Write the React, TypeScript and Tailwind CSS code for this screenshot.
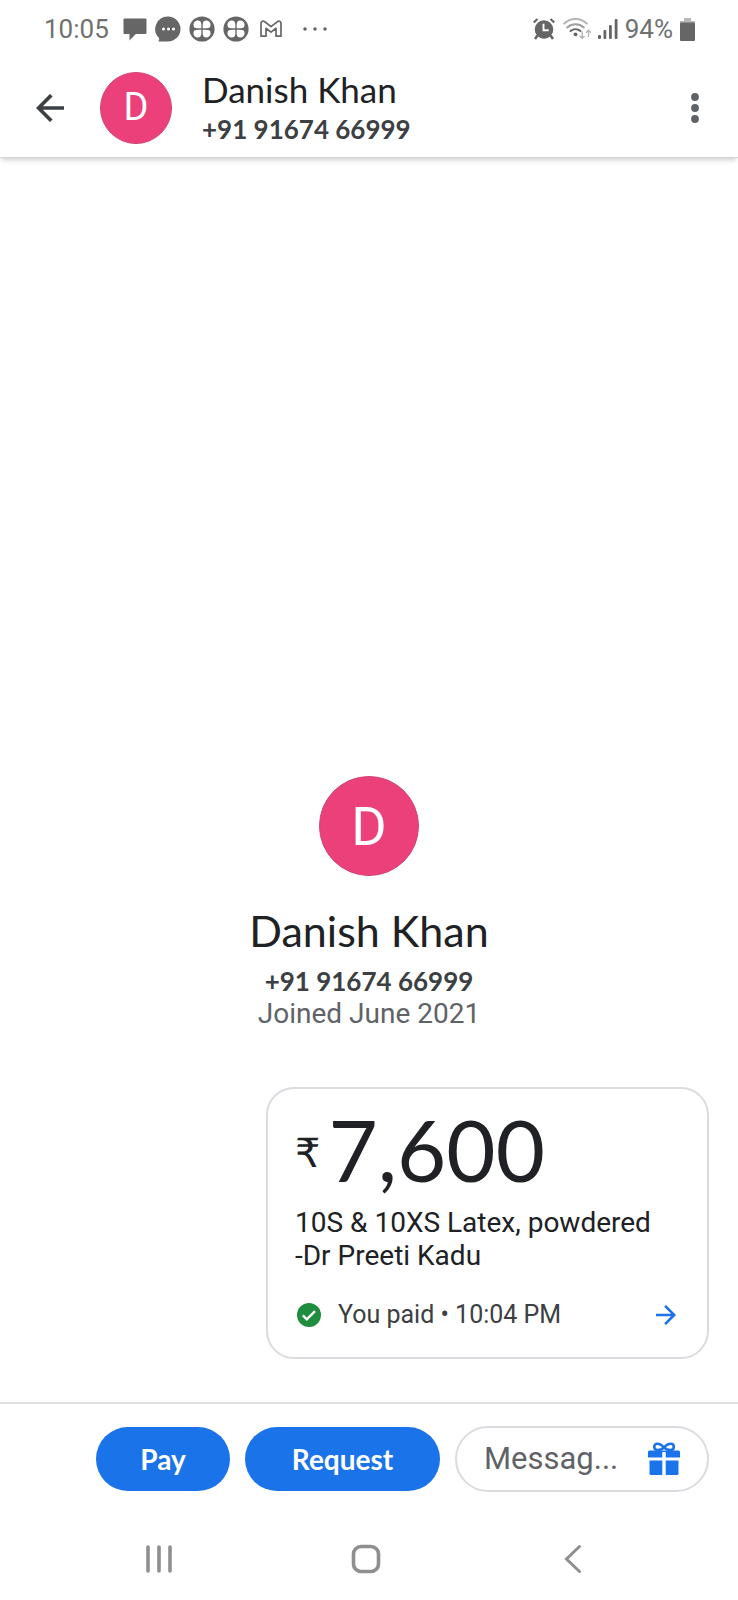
import type { ReactNode } from "react";

const GREY = "#666666";

function ChatSquareIcon() {
  return (
    <svg viewBox="0 0 24 24" className="h-6 w-6" fill={GREY} aria-hidden="true">
      <path d="M1.500 1.500h21a1 1 0 0 1 1 1v13.500a1 1 0 0 1-1 1H12.800L6.500 23.500v-6.500h-5a1 1 0 0 1-1-1V2.500a1 1 0 0 1 1-1z" />
    </svg>
  );
}

function ChatRoundIcon() {
  return (
    <svg viewBox="0 0 26 26" className="h-[26px] w-[26px]" fill={GREY} aria-hidden="true">
      <path d="M13 .5a12.500 12.500 0 1 1 0 25H3.200c.9-.9 1.100-2 .8-3.600A12.500 12.500 0 0 1 13 .5z" />
      <circle cx="8.500" cy="13" r="1.500" fill="#fff" />
      <circle cx="13.500" cy="13" r="1.500" fill="#fff" />
      <circle cx="18.500" cy="13" r="1.500" fill="#fff" />
    </svg>
  );
}

function CloverIcon() {
  const petal = "M12.300 12.300C12.400 9.500 12.400 7.500 11.700 5.700A3.500 3.500 0 1 0 5.700 11.700C7.500 12.400 9.500 12.400 12.300 12.300z";
  return (
    <svg viewBox="0 0 26 26" className="h-[26px] w-[26px]" aria-hidden="true">
      <circle cx="13" cy="13" r="12.600" fill={GREY} />
      <g fill="#fff">
        {[0, 90, 180, 270].map((angle) => (
          <path key={angle} d={petal} transform={`rotate(${angle} 13 13)`} />
        ))}
      </g>
    </svg>
  );
}

function MailIcon() {
  return (
    <svg viewBox="0 0 24 18" className="h-[18px] w-6" fill="none" stroke={GREY} strokeWidth="1.700" strokeLinejoin="round" aria-hidden="true">
      <path d="M2 3.500C2 1 4.200.6 5.800 1.800L12 6.600l6.200-4.800C19.800.6 22 1 22 3.500V16.200h-5V8.300l-5 3.800-5-3.800v7.900H2z" />
    </svg>
  );
}

function AlarmIcon() {
  return (
    <svg viewBox="0 0 24 24" className="h-6 w-6" fill="none" stroke={GREY} aria-hidden="true">
      <circle cx="12" cy="12.500" r="9.300" fill={GREY} stroke="none" />
      <path d="M1.700 5.500 5.500 2M22.300 5.500 18.500 2" strokeWidth="2.200" />
      <path d="M5.500 18.500 3 22M18.500 18.500 21 22" strokeWidth="2.600" />
      <path d="M11.500 6.800v6.400h5.200" stroke="#fff" strokeWidth="1.900" />
    </svg>
  );
}

function WifiIcon() {
  return (
    <svg viewBox="0 0 28 24" className="h-6 w-7" fill="none" strokeLinecap="round" aria-hidden="true">
      <path d="M1.200 6.500C7.500.4 17.500.4 23.800 6.500" stroke="#b5b5b5" strokeWidth="2" />
      <path d="M4.200 10.400c4.800-4.300 11.800-4.300 16.600 0" stroke="#a0a0a0" strokeWidth="2" />
      <path d="M7.500 14c2.900-2.500 7.100-2.500 10 0" stroke={GREY} strokeWidth="2" />
      <circle cx="12.500" cy="17.300" r="1.900" fill={GREY} />
      <path d="M19.200 15v6M17.200 19.200l2 2 2-2M25.500 19.500v-6M23.500 15.300l2-2 2 2" stroke="#b5b5b5" strokeWidth="1.400" />
    </svg>
  );
}

function SignalIcon() {
  return (
    <svg viewBox="0 0 20 20" className="h-5 w-5" fill={GREY} aria-hidden="true">
      <rect x="0" y="16" width="3" height="4" rx="1" />
      <rect x="5.500" y="11" width="2.800" height="9" rx="1" />
      <rect x="11" y="6" width="2.800" height="14" rx="1" />
      <rect x="16.700" y="0" width="2.800" height="20" rx="1" />
    </svg>
  );
}

function BatteryIcon() {
  return (
    <svg viewBox="0 0 15 23" className="h-[23px] w-[15px]" aria-hidden="true">
      <path d="M4 0h7v3h4v3H0V3h4z" fill="#b8b8b8" />
      <rect x="0" y="4.500" width="15" height="18.500" rx="1" fill={GREY} />
    </svg>
  );
}

function ArrowIcon({ className }: { className: string }) {
  return (
    <svg viewBox="0 0 28 28" className={className} fill="none" stroke="currentColor" strokeWidth="3.600" aria-hidden="true">
      <path d="M28 14H2.500M15.300 1.200 2.500 14l12.800 12.800" />
    </svg>
  );
}

function GiftIcon() {
  return (
    <svg viewBox="0 0 34 34" className="h-[34px] w-[34px]" fill="#1a73e8" aria-hidden="true">
      <path d="M2.500 8.500H31.500A1.500 1.500 0 0 1 33 10v5.500H18.700V10h-3.400v5.500H1V10a1.500 1.500 0 0 1 1.500-1.500z" />
      <path d="M2.500 18.500h12.800V33H3.800a1.300 1.300 0 0 1-1.300-1.300zM18.700 18.500h12.800v13.200a1.300 1.300 0 0 1-1.300 1.300H18.700z" />
      <path d="M17 5.500C14.500 2.500 12.500 1.700 10.300 1.700 8.500 1.700 7.200 3 7.200 4.700c0 1.900 1.400 3.300 3.300 3.300 2.300 0 4.300-.6 6.500-2.500 2.200 1.900 4.200 2.500 6.500 2.500 1.900 0 3.300-1.400 3.300-3.300 0-1.700-1.300-3-3.100-3-2.200 0-4.200.8-6.700 3.800z" fill="#fff" stroke="#1a73e8" strokeWidth="2.600" />
    </svg>
  );
}

function StatusBar() {
  return (
    <div className="flex h-[58px] items-center justify-between pr-[43px] pl-11 font-[Roboto,sans-serif] text-[26px] text-[#707070]">
      <div className="flex items-center gap-2">
        <span className="mr-[6px]">10:05</span>
        <ChatSquareIcon />
        <ChatRoundIcon />
        <CloverIcon />
        <CloverIcon />
        <div className="ml-[2px]"><MailIcon /></div>
        <svg viewBox="0 0 24 4" className="ml-3 h-1 w-6" fill={GREY} aria-hidden="true">
          <circle cx="2" cy="2" r="1.800" />
          <circle cx="12" cy="2" r="1.800" />
          <circle cx="22" cy="2" r="1.800" />
        </svg>
      </div>
      <div className="flex items-center gap-[7px]">
        <AlarmIcon />
        <WifiIcon />
        <SignalIcon />
        <span>94%</span>
        <BatteryIcon />
      </div>
    </div>
  );
}

function Avatar({ className }: { className: string }) {
  return (
    <div className={`flex shrink-0 items-center justify-center rounded-full border border-[#cf4577] bg-[#ec407a] font-[Roboto,sans-serif] text-white ${className}`}>
      D
    </div>
  );
}

function NavButton({ label, children }: { label: string; children: ReactNode }) {
  return (
    <button type="button" aria-label={label} className="flex h-12 items-center justify-center">
      <svg viewBox="0 0 30 30" className="h-[30px] w-[30px]" fill="none" stroke="#8f8f8f" strokeWidth="3.600" strokeLinecap="round" aria-hidden="true">
        {children}
      </svg>
    </button>
  );
}

export default function App() {
  return (
    <div className="flex min-h-screen flex-col bg-white font-[Lato,sans-serif] text-[#202124]">
      <StatusBar />
      <header className="flex h-[100px] items-center border-b border-[#d4d4d4] pr-[27px] pl-9 shadow-[0_4px_5px_-2px_rgba(0,0,0,0.2)]">
        <button type="button" aria-label="Back" className="mr-9 text-[#3c4043]">
          <ArrowIcon className="h-7 w-7" />
        </button>
        <Avatar className="h-[72px] w-[72px] text-[38px]" />
        <div className="ml-[30px] flex-1">
          <h1 className="text-[35px] leading-[42px]">Danish Khan</h1>
          <p className="text-[26px] leading-[38px] font-bold text-[#3c4043]">+91 91674 66999</p>
        </div>
        <button type="button" aria-label="More options" className="flex w-8 justify-center">
          <svg viewBox="0 0 8 30" className="h-[30px] w-2" fill="#5f6368" aria-hidden="true">
            <circle cx="4" cy="4" r="3.900" />
            <circle cx="4" cy="15" r="3.900" />
            <circle cx="4" cy="26" r="3.900" />
          </svg>
        </button>
      </header>

      <main className="flex flex-1 flex-col justify-end px-[29px] pb-[43px]">
        <section className="flex flex-col items-center">
          <Avatar className="h-[100px] w-[100px] text-[54px]" />
          <h2 className="mt-7 text-[43px] leading-[54px]">Danish Khan</h2>
          <p className="mt-[7px] text-[26px] leading-8 font-bold text-[#3c4043]">+91 91674 66999</p>
          <p className="font-[Roboto,sans-serif] text-[28px] leading-[33px] text-[#5f6368]">Joined June 2021</p>
        </section>

        <article className="mt-[57px] w-[443px] self-end rounded-[28px] border-2 border-[#dadce0] px-[27px] pb-6">
          <p className="flex items-center pt-[18px]">
            <span className="mr-2 pt-2 font-['DejaVu_Sans',sans-serif] text-[40px] leading-[48px]">₹</span>
            <span className="text-[85px] leading-[84px]">7,600</span>
          </p>
          <p className="mt-[15px] font-[Roboto,sans-serif] text-[28px] leading-[33px]">
            10S &amp; 10XS Latex, powdered
            <br />
            -Dr Preeti Kadu
          </p>
          <div className="mt-[25px] flex h-9 items-center font-[Roboto,sans-serif] text-[25px] text-[#3c4043]">
            <svg viewBox="0 0 24 24" className="mr-[17px] ml-[2px] h-6 w-6" fill="none" aria-hidden="true">
              <circle cx="12" cy="12" r="12" fill="#1e8e3e" />
              <path d="m5.800 12.300 4 4 8.200-8.200" stroke="#fff" strokeWidth="2.400" />
            </svg>
            <span className="flex-1">You paid • 10:04 PM</span>
            <a href="#details" aria-label="Payment details" className="mr-1 text-[#1a73e8]">
              <ArrowIcon className="h-5 w-5 rotate-180" />
            </a>
          </div>
        </article>
      </main>

      <footer className="flex items-center gap-[15px] border-t-2 border-[#dfdfdf] pt-[22px] pr-[29px] pb-5 pl-24">
        <button type="button" className="h-16 w-[134px] rounded-full bg-[#1a73e8] text-[28px] font-bold text-white">Pay</button>
        <button type="button" className="h-16 w-[195px] rounded-full bg-[#1a73e8] text-[28px] font-bold text-white">Request</button>
        <div className="flex h-[66px] min-w-0 flex-1 items-center rounded-full border-2 border-[#dadce0] pr-[26px] pl-[27px]">
          <input
            type="text"
            aria-label="Message"
            placeholder="Messag..."
            className="w-0 min-w-0 flex-1 bg-transparent font-[Roboto,sans-serif] text-[31px] text-[#5f6368] outline-none placeholder:text-[#5f6368]"
          />
          <button type="button" aria-label="Send a gift">
            <GiftIcon />
          </button>
        </div>
      </footer>

      <nav aria-label="System" className="grid grid-cols-3 pt-[23px] pr-[62px] pb-[17px] pl-14">
        <NavButton label="Recent apps">
          <path d="M4 3v24M15 3v24M26 3v24" />
        </NavButton>
        <NavButton label="Home">
          <rect x="2.500" y="2.500" width="25" height="25" rx="7.500" />
        </NavButton>
        <NavButton label="Go back">
          <path d="M21.500 2.500 8.500 15l13 12.500" strokeWidth="3" />
        </NavButton>
      </nav>
    </div>
  );
}
